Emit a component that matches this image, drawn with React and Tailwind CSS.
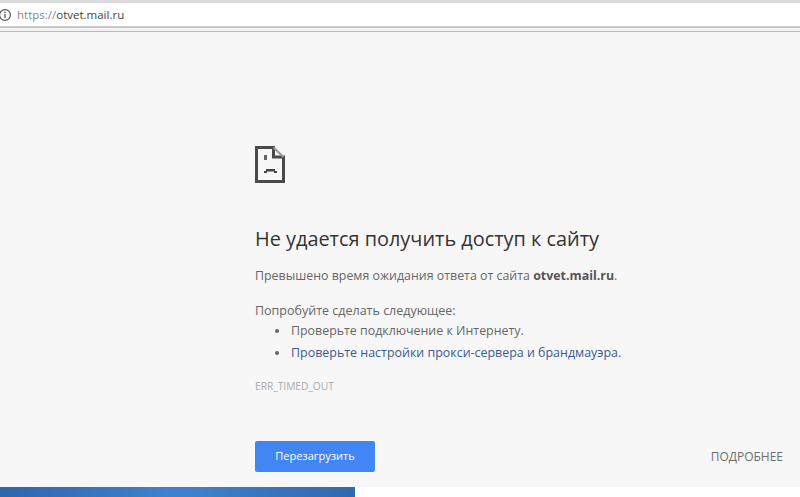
const App = () => {
  return (
    <div className="flex h-[497px] w-[800px] flex-col overflow-hidden bg-white font-['Open_Sans',sans-serif]">
      {/* address bar */}
      <div className="h-[3px] bg-[#dcdcdc]" />
      <div className="flex h-[25px] items-center border-b-2 border-[#c8c8c8] bg-white">
        <svg className="ml-[-2px] h-[14px] w-[14px] shrink-0" viewBox="0 0 14 14" fill="none">
          <circle cx="7" cy="7" r="5.4" stroke="#555" strokeWidth="1.2" />
          <path d="M7 6V10M7 3.6V5" stroke="#555" strokeWidth="1.3" />
        </svg>
        <span className="ml-[5px] text-[11.5px] text-[#8a8a8a]">
          https://<span className="text-[#444]">otvet.mail.ru</span>
        </span>
      </div>
      <div className="h-[4px] border-b border-[#b9b9b9] bg-[#f4f4f4]" />

      {/* error page */}
      <div className="flex flex-1 flex-col bg-[#f7f7f7] pl-[255px]">
        <svg className="mt-[114px] h-[37px] w-[30px]" viewBox="0 0 30 37" fill="none">
          <path d="M1.5 1.5H18.5V11H28.5V35.5H1.5Z" stroke="#4a4a4a" strokeWidth="3" />
          <path d="M18.5 1.5L28.5 11" stroke="#9a9a9a" strokeWidth="2" />
          <path d="M9 9H12V14H9Z" fill="#666" />
          <path d="M9 27V25H11V23H20V25H22V27H19V25.5H12V27Z" fill="#444" />
        </svg>
        <h1 className="mt-[42px] text-[19.9px] leading-[27px] font-normal text-[#333]">
          Не удается получить доступ к сайту
        </h1>
        <p className="mt-[14px] text-[12.4px] leading-[20px] text-[#666]">
          Превышено время ожидания ответа от сайта <b className="font-bold text-[#555]">otvet.mail.ru</b>.
        </p>
        <p className="mt-[15px] text-[12.5px] leading-[20px] text-[#666]">Попробуйте сделать следующее:</p>
        <ul className="mt-[-1px] text-[12.4px] leading-[22px] text-[#666]">
          <li className="flex items-center">
            <span className="ml-[20px] h-1 w-1 rounded-full bg-[#666]" />
            <span className="ml-[12px]">Проверьте подключение к Интернету.</span>
          </li>
          <li className="flex items-center">
            <span className="ml-[20px] h-1 w-1 rounded-full bg-[#666]" />
            <span className="ml-[12px] text-[12.45px] text-[#3b5b8c]">Проверьте настройки прокси-сервера и брандмауэра.</span>
          </li>
        </ul>
        <p className="mt-[15px] text-[10.2px] leading-[14px] text-[#ababab]">ERR_TIMED_OUT</p>

        <div className="mt-[48px] flex items-center justify-between pr-[17px]">
          <button className="h-[31px] w-[120px] rounded-[2px] bg-[#4285f4] text-[11px] text-white">Перезагрузить</button>
          <span className="text-[12px] text-[#6e6e6e]">ПОДРОБНЕЕ</span>
        </div>
      </div>

      {/* taskbar edge */}
      <div className="h-[10px] bg-white">
        <div className="h-full w-[355px] bg-gradient-to-r from-[#2f66ac] via-[#3f83cf] to-[#3169ae]" />
      </div>
    </div>
  );
};

export default App;
